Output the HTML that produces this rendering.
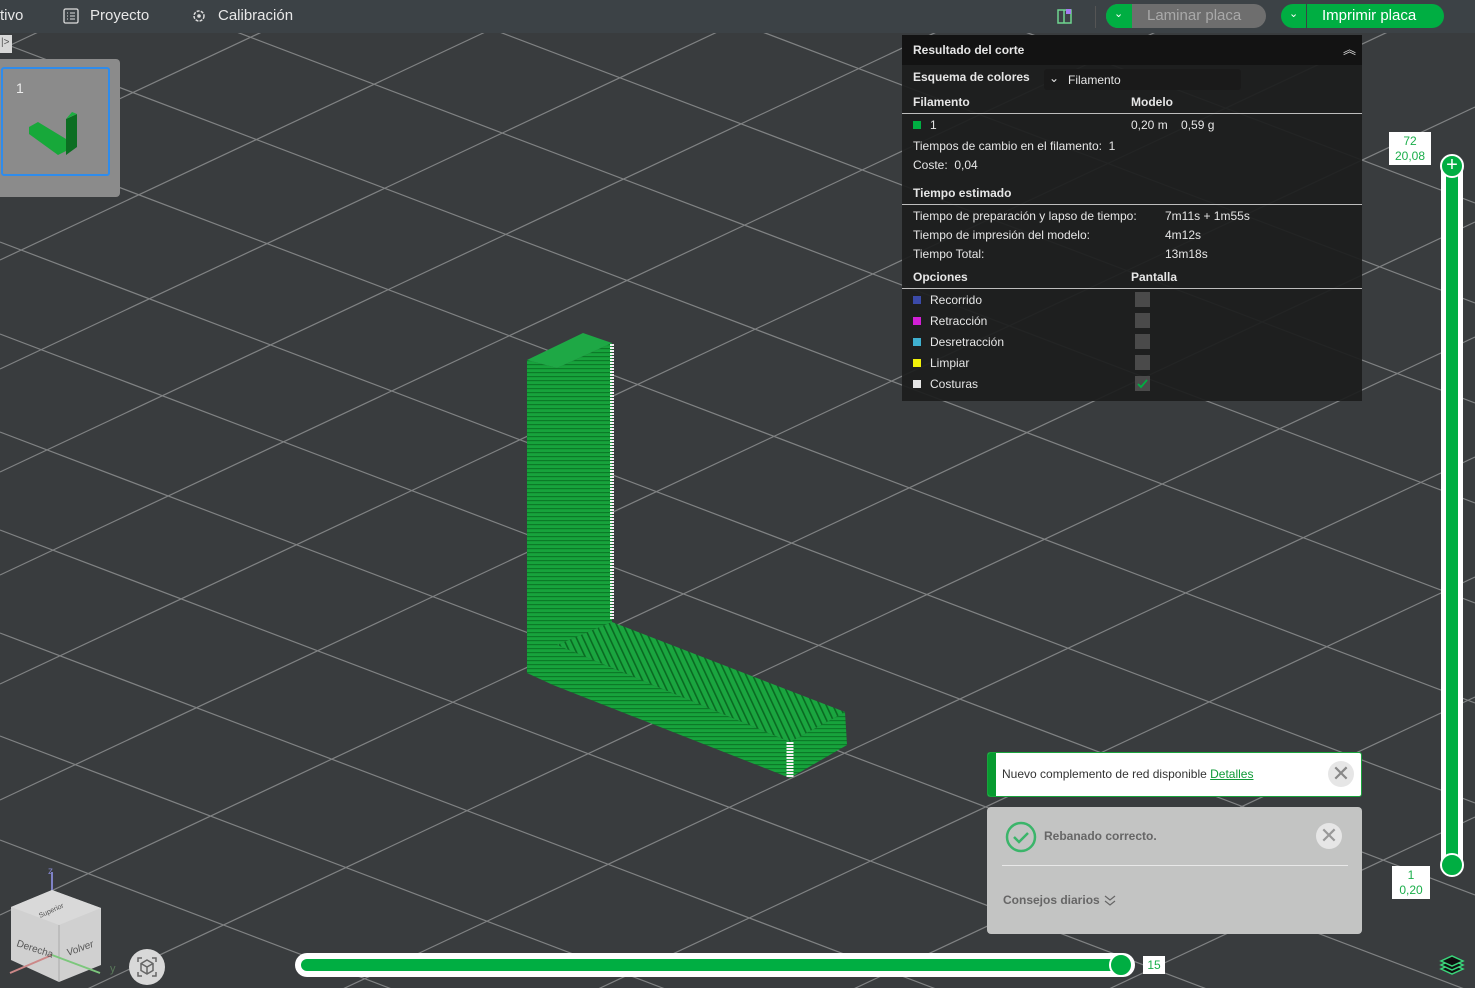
<!DOCTYPE html>
<html><head><meta charset="utf-8"><style>
*{margin:0;padding:0;box-sizing:border-box}
html{overflow:hidden}
body{width:1475px;height:988px;overflow:hidden;background:#393c3e;font-family:"Liberation Sans",sans-serif;position:relative}
.abs{position:absolute}
#top{left:0;top:0;width:1475px;height:33px;background:#3c4246;color:#e8e8e8;font-size:15px}
#panel{left:902px;top:35px;width:460px;height:366px;background:rgba(28,29,29,0.93);color:#e6e6e6;font-size:12px}
#panel .r{position:absolute;left:11px;white-space:nowrap}
#panel b{font-weight:bold}
.hl{position:absolute;left:0;width:460px;height:1px;background:#bdbdbd}
.sw{display:inline-block;width:8px;height:8px;margin-right:9px;vertical-align:0}
.cb{position:absolute;left:233px;width:15px;height:15px;background:#4a4a4a}
</style></head><body>
<svg class="abs" style="left:0;top:0" width="1475" height="988">
<g stroke="#8d8f90" stroke-width="1.2" opacity="0.85">
<line x1="0" y1="-358" x2="1475" y2="203"/><line x1="0" y1="-258" x2="1475" y2="303"/><line x1="0" y1="-158" x2="1475" y2="403"/>
<line x1="0" y1="-58" x2="1475" y2="503"/><line x1="0" y1="42" x2="1475" y2="603"/><line x1="0" y1="142" x2="1475" y2="703"/>
<line x1="0" y1="242" x2="1475" y2="803"/><line x1="0" y1="334" x2="1475" y2="895"/><line x1="0" y1="432" x2="1475" y2="993"/>
<line x1="0" y1="530" x2="1475" y2="1091"/><line x1="0" y1="633" x2="1475" y2="1194"/><line x1="0" y1="736" x2="1475" y2="1297"/>
<line x1="0" y1="840" x2="1475" y2="1401"/>
<line x1="0" y1="50" x2="1475" y2="-643"/><line x1="0" y1="155" x2="1475" y2="-538"/><line x1="0" y1="260" x2="1475" y2="-433"/>
<line x1="0" y1="369" x2="1475" y2="-324"/><line x1="0" y1="472" x2="1475" y2="-221"/><line x1="0" y1="575" x2="1475" y2="-118"/>
<line x1="0" y1="684" x2="1475" y2="-9"/><line x1="0" y1="800" x2="1475" y2="107"/><line x1="0" y1="915" x2="1475" y2="222"/>
<line x1="0" y1="1030" x2="1475" y2="337"/><line x1="0" y1="1150" x2="1475" y2="457"/><line x1="0" y1="1270" x2="1475" y2="577"/>
<line x1="0" y1="1390" x2="1475" y2="697"/><line x1="0" y1="1510" x2="1475" y2="817"/>
</g>
<defs>
<pattern id="h" width="4" height="4" patternUnits="userSpaceOnUse"><rect width="4" height="4" fill="#17a33c"/><rect width="4" height="1.2" fill="#0c7a28"/></pattern>
<pattern id="d" width="6" height="6" patternUnits="userSpaceOnUse" patternTransform="rotate(-25)"><rect width="6" height="6" fill="#1aa53f"/><rect width="1.6" height="6" fill="#0a6a22"/></pattern>
</defs>
<polygon points="527,360 557,368 557,668 527,673" fill="url(#h)"/>
<polygon points="557,368 612,343 612,622 557,645" fill="url(#h)"/>
<polygon points="527,360 583,333 612,343 557,368" fill="#1ea845"/>
<polygon points="557,645 612,622 845,712 790,742" fill="url(#d)"/>
<polygon points="527,655 557,645 790,742 790,778 553,685 527,673" fill="url(#h)"/>
<polygon points="790,742 845,712 847,745 790,778" fill="url(#h)"/>
<line x1="612" y1="344" x2="612" y2="620" stroke="#f2f2f2" stroke-width="4" stroke-dasharray="2 1"/>
<line x1="790" y1="742" x2="790" y2="777" stroke="#f2f2f2" stroke-width="7" stroke-dasharray="2 1"/>
</svg>

<div id="top" class="abs">
<span class="abs" style="left:0;top:7px">tivo</span>
<svg class="abs" style="left:63px;top:8px" width="16" height="16"><rect x="1" y="1" width="14" height="14" rx="1.5" fill="none" stroke="#ddd" stroke-width="1.3"/><path d="M4 5h1M7 5h5M4 8h1M7 8h5M4 11h1M7 11h5" stroke="#ddd"/></svg>
<span class="abs" style="left:90px;top:7px">Proyecto</span>
<svg class="abs" style="left:192px;top:9px" width="14" height="14"><circle cx="7" cy="7" r="5" fill="none" stroke="#ddd" stroke-width="1.5" stroke-dasharray="3 1.2"/><circle cx="7" cy="7" r="1.8" fill="#ddd"/></svg>
<span class="abs" style="left:218px;top:7px">Calibración</span>
<svg class="abs" style="left:1057px;top:8px" width="16" height="16"><rect x="1" y="2" width="13" height="13" fill="none" stroke="#6fd58f" stroke-width="1.5"/><line x1="7" y1="2" x2="7" y2="15" stroke="#6fd58f" stroke-width="1.5"/><rect x="9" y="1" width="5" height="5" fill="#a47cf0"/></svg>
<div class="abs" style="left:1095px;top:6px;width:1px;height:22px;background:#555"></div>
<div class="abs" style="left:1106px;top:4px;width:160px;height:24px;border-radius:12px;background:#6e6e6e;overflow:hidden">
<div class="abs" style="left:0;top:0;width:26px;height:24px;background:#00ae42"></div>
<span class="abs" style="left:8px;top:3px;color:#fff;font-size:11px">⌄</span>
<span class="abs" style="left:41px;top:3px;color:#a9a9a9">Laminar placa</span></div>
<div class="abs" style="left:1281px;top:4px;width:163px;height:24px;border-radius:12px;background:#00ae42">
<div class="abs" style="left:25px;top:0;width:1px;height:24px;background:#3c4246"></div>
<span class="abs" style="left:8px;top:3px;color:#fff;font-size:11px">⌄</span>
<span class="abs" style="left:41px;top:3px;color:#fff">Imprimir placa</span></div>
</div>

<div class="abs" style="left:0;top:35px;width:12px;height:18px;background:#d8d8d8;font-size:10px;color:#555;padding:2px 1px">|&gt;</div>
<div class="abs" style="left:0;top:59px;width:120px;height:138px;background:#8b8b8b;border-radius:0 4px 4px 0">
<div class="abs" style="left:1px;top:8px;width:109px;height:109px;border:2px solid #2f8cec;border-radius:3px"></div>
<span class="abs" style="left:16px;top:21px;color:#eee;font-size:14px">1</span>
<svg class="abs" style="left:28px;top:48px" width="55" height="55"><polygon points="1,20 10,15 38,32 38,44 30,48 1,27" fill="#17a83a"/><polygon points="38,12 49,7 49,40 38,48" fill="#0c6e22"/><polygon points="38,12 44,9 49,7 44,5" fill="#1bb040"/></svg>
</div>

<div id="panel" class="abs">
<div class="abs" style="left:0;top:0;width:460px;height:30px;background:rgba(18,18,18,0.9)"></div>
<div class="r" style="top:8px"><b>Resultado del corte</b></div>
<span class="abs" style="left:441px;top:4px;font-size:13px;color:#ddd">︽</span>
<div class="r" style="top:35px"><b>Esquema de colores</b></div>
<div class="abs" style="left:142px;top:34px;width:197px;height:21px;background:#1a1a1a;border-radius:3px"><span class="abs" style="left:5px;top:2px">⌄</span><span class="abs" style="left:24px;top:4px">Filamento</span></div>
<div class="r" style="top:60px"><b>Filamento</b></div><div class="r" style="left:229px;top:60px"><b>Modelo</b></div>
<div class="hl" style="top:78px"></div>
<div class="r" style="top:83px"><span class="sw" style="background:#00ae42"></span>1</div>
<div class="r" style="left:229px;top:83px">0,20 m&nbsp;&nbsp;&nbsp; 0,59 g</div>
<div class="r" style="top:104px">Tiempos de cambio en el filamento:&nbsp;&nbsp;1</div>
<div class="r" style="top:123px">Coste:&nbsp;&nbsp;0,04</div>
<div class="r" style="top:151px"><b>Tiempo estimado</b></div>
<div class="hl" style="top:169px"></div>
<div class="r" style="top:174px">Tiempo de preparación y lapso de tiempo:</div><div class="r" style="left:263px;top:174px">7m11s + 1m55s</div>
<div class="r" style="top:193px">Tiempo de impresión del modelo:</div><div class="r" style="left:263px;top:193px">4m12s</div>
<div class="r" style="top:212px">Tiempo Total:</div><div class="r" style="left:263px;top:212px">13m18s</div>
<div class="r" style="top:235px"><b>Opciones</b></div><div class="r" style="left:229px;top:235px"><b>Pantalla</b></div>
<div class="hl" style="top:253px"></div>
<div class="r" style="top:258px"><span class="sw" style="background:#3b4aa8"></span>Recorrido</div><div class="cb" style="top:257px"></div>
<div class="r" style="top:279px"><span class="sw" style="background:#d21fd6"></span>Retracción</div><div class="cb" style="top:278px"></div>
<div class="r" style="top:300px"><span class="sw" style="background:#3fb0d0"></span>Desretracción</div><div class="cb" style="top:299px"></div>
<div class="r" style="top:321px"><span class="sw" style="background:#f2f20a"></span>Limpiar</div><div class="cb" style="top:320px"></div>
<div class="r" style="top:342px"><span class="sw" style="background:#e6e6e6"></span>Costuras</div><div class="cb" style="top:341px"><svg width="15" height="15"><path d="M3 8l3 3 6-7" stroke="#00ae42" stroke-width="1.8" fill="none"/></svg></div>
</div>

<div class="abs" style="left:1441px;top:160px;width:22px;height:712px;border-radius:11px;background:#fff"></div>
<div class="abs" style="left:1446px;top:165px;width:12px;height:700px;background:#00ae42"></div>
<div class="abs" style="left:1440px;top:154px;width:24px;height:24px;border-radius:50%;background:#00ae42;border:2px solid #fff;color:#fff;text-align:center;font-size:20px;line-height:19px">+</div>
<div class="abs" style="left:1440px;top:853px;width:24px;height:24px;border-radius:50%;background:#00ae42;border:2px solid #fff"></div>
<div class="abs" style="left:1389px;top:132px;width:42px;height:33px;background:#fff;color:#1aae4a;font-size:12px;text-align:center;line-height:15px;padding-top:2px">72<br>20,08</div>
<div class="abs" style="left:1392px;top:866px;width:38px;height:33px;background:#fff;color:#1aae4a;font-size:12px;text-align:center;line-height:15px;padding-top:2px">1<br>0,20</div>

<div class="abs" style="left:295px;top:953px;width:840px;height:24px;border-radius:12px;background:#fff"></div>
<div class="abs" style="left:301px;top:959px;width:822px;height:12px;border-radius:6px;background:#00ae42"></div>
<div class="abs" style="left:1109px;top:953px;width:24px;height:24px;border-radius:50%;background:#00ae42;border:2px solid #fff"></div>
<div class="abs" style="left:1143px;top:956px;width:22px;height:18px;background:#fff;color:#1aae4a;font-size:12px;text-align:center;line-height:18px">15</div>

<div class="abs" style="left:987px;top:752px;width:375px;height:45px;background:#fff;border:1px solid #19a33c;border-radius:3px;overflow:hidden">
<div class="abs" style="left:0;top:0;width:8px;height:45px;background:#079b30"></div>
<span class="abs" style="left:14px;top:14px;font-size:12px;color:#333">Nuevo complemento de red disponible <span style="color:#0f9a37;text-decoration:underline">Detalles</span></span>
<div class="abs" style="left:340px;top:8px;width:26px;height:26px;border-radius:50%;background:#e6e6e6;color:#888;font-size:22px;text-align:center;line-height:25px">✕</div>
</div>
<div class="abs" style="left:987px;top:807px;width:375px;height:127px;background:#c3c4c3;border-radius:4px">
<svg class="abs" style="left:18px;top:14px" width="34" height="34"><circle cx="16" cy="16" r="14" fill="none" stroke="#3bb56a" stroke-width="2.5"/><path d="M9 16l5 5 9-9" stroke="#3bb56a" stroke-width="2.5" fill="none"/></svg>
<span class="abs" style="left:57px;top:22px;font-size:12px;font-weight:bold;color:#666">Rebanado correcto.</span>
<div class="abs" style="left:329px;top:16px;width:26px;height:26px;border-radius:50%;background:#e6e6e6;color:#999;font-size:22px;text-align:center;line-height:25px">✕</div>
<div class="abs" style="left:15px;top:58px;width:346px;height:1px;background:#e8e8e8"></div>
<span class="abs" style="left:16px;top:86px;font-size:12px;font-weight:bold;color:#666">Consejos diarios</span>
<svg class="abs" style="left:117px;top:87px" width="12" height="12"><path d="M1 2l5 4 5-4M1 7l5 4 5-4" stroke="#666" stroke-width="1.2" fill="none"/></svg>
</div>

<svg class="abs" style="left:1439px;top:954px" width="26" height="24"><g fill="#0f0f0f" stroke="#3ad57a" stroke-width="1.5"><path d="M2 15l11 5 11-5-11-5z"/><path d="M2 11l11 5 11-5-11-5z"/><path d="M2 7l11 5 11-5-11-5z"/></g></svg>

<svg class="abs" style="left:0;top:860px" width="130" height="128">
<line x1="52" y1="90" x2="52" y2="12" stroke="#7f82c6" stroke-width="2"/>
<text x="48" y="14" font-size="10" fill="#7f82c6" font-family="Liberation Sans">z</text>
<polygon points="11,47 52,30 101,48 101,105 59,122 11,100" fill="#d0d0d0"/>
<polygon points="11,47 52,30 101,48 59,65" fill="#d9d9d9"/>
<path d="M59,65 L59,122" stroke="#aaa"/>
<line x1="52" y1="95" x2="100" y2="113" stroke="#7cc77c" stroke-width="2"/>
<line x1="52" y1="95" x2="10" y2="113" stroke="#c88" stroke-width="2"/>
<text x="16" y="86" font-size="10" fill="#555" transform="rotate(18 16 86)" font-family="Liberation Sans">Derecha</text>
<text x="68" y="96" font-size="10" fill="#555" font-style="italic" transform="rotate(-20 68 96)" font-family="Liberation Sans">Volver</text>
<text x="40" y="58" font-size="7" fill="#555" transform="rotate(-24 40 58)" font-family="Liberation Sans">Superior</text>
<text x="110" y="112" font-size="11" fill="#5a7a5a" font-family="Liberation Sans">y</text>
</svg>
<div class="abs" style="left:129px;top:949px;width:36px;height:36px;border-radius:50%;background:#d8d8d8">
<svg width="36" height="36"><path d="M9 13v-4h4M23 9h4v4M27 23v4h-4M13 27h-4v-4" stroke="#666" stroke-width="1.5" fill="none"/><path d="M18 11l6 3.5v7L18 25l-6-3.5v-7z M12 14.5l6 3.5 6-3.5 M18 18v7" stroke="#666" stroke-width="1.5" fill="none"/></svg>
</div>
</body></html>
